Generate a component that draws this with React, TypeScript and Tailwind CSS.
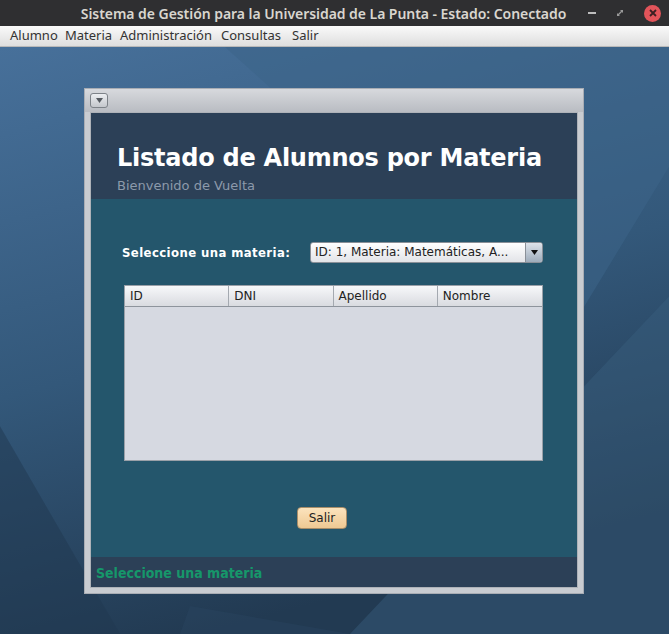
import React from 'react';

const dialog = { fontFamily: '"DejaVu Sans", "Liberation Sans", sans-serif' };
const condensed = { fontFamily: '"DejaVu Sans Condensed", "DejaVu Sans", sans-serif', fontStretch: 'condensed' as const };
const ubuntu = { fontFamily: '"Noto Sans", "Open Sans", sans-serif' };

const MENU = [
  { label: 'Alumno', cls: 'w-[55px]' },
  { label: 'Materia', cls: 'w-[55px]' },
  { label: 'Administración', cls: 'w-[101px]' },
  { label: 'Consultas', cls: 'w-[71px]' },
  { label: 'Salir', cls: 'w-[40px]' },
];
const COLUMNS = ['ID', 'DNI', 'Apellido', 'Nombre'];

function Wallpaper() {
  return (
    <svg className="absolute inset-0 w-full h-full" viewBox="0 0 669 588" preserveAspectRatio="none">
      <defs>
        <linearGradient id="wp" x1="0" y1="0" x2="0.3" y2="1">
          <stop offset="0" stopColor="#47709a" />
          <stop offset="0.55" stopColor="#33587a" />
          <stop offset="1" stopColor="#223a52" />
        </linearGradient>
      </defs>
      <rect width="669" height="588" fill="url(#wp)" />
      <polygon points="225,0 669,0 669,120 560,300" fill="#3d6489" opacity="0.55" />
      <polygon points="0,380 0,588 120,588" fill="#1f3750" opacity="0.5" />
      <polygon points="669,250 669,588 350,588" fill="#3a5f7f" opacity="0.45" />
      <polygon points="190,560 350,588 180,588" fill="#2a4561" opacity="0.4" />
    </svg>
  );
}

export default function App() {
  return (
    <div className="w-[669px] h-[634px] flex flex-col overflow-hidden bg-[#2f3136]">
      {/* Window title bar */}
      <div className="h-[26px] flex items-center relative bg-[#2f2f31]" style={ubuntu}>
        <div className="flex-1 text-center text-[14px] font-semibold text-[#d9d6cf] tracking-[-0.05px] pr-[22px]">
          Sistema de Gestión para la Universidad de La Punta - Estado: Conectado
        </div>
        <div className="absolute right-0 top-0 h-[26px] flex items-center gap-[19px] pr-[8px]">
          <div className="w-[8px] h-[2px] bg-[#bdbdbd]" />
          <svg width="10" height="10" viewBox="0 0 10 10">
            <path d="M2 8 L2 5 L5 8 Z M8 2 L8 5 L5 2 Z" fill="#9a9a9a" />
            <path d="M3 7 L7 3" stroke="#9a9a9a" strokeWidth="1.2" />
          </svg>
          <div className="w-[17px] h-[17px] rounded-full bg-[#e2545a] flex items-center justify-center">
            <svg width="8" height="8" viewBox="0 0 8 8">
              <path d="M1 1 L7 7 M7 1 L1 7" stroke="#3a1f22" strokeWidth="1.8" />
            </svg>
          </div>
        </div>
      </div>

      {/* Menu bar */}
      <div className="h-[21px] flex items-center pl-[10px] bg-gradient-to-b from-[#fafafa] to-[#dedede] border-b border-[#b9b9b9] text-[13px] text-[#333]" style={ubuntu}>
        {MENU.map(m => (
          <span key={m.label} className={m.cls}>{m.label}</span>
        ))}
      </div>

      {/* Desktop */}
      <div className="flex-1 relative pl-[84px] pt-[41px]">
        <Wallpaper />

        {/* Internal frame */}
        <div className="relative w-[500px] h-[506px] flex flex-col bg-[#c9ccd1] border border-[#a9adb4]" style={dialog}>
          <div className="h-[23px] flex items-center pl-[5px] bg-gradient-to-b from-[#d7d9dd] to-[#b9bcc2]">
            <div className="w-[18px] h-[15px] rounded-[3px] border border-[#7d8288] bg-gradient-to-b from-[#eceef1] to-[#c4c7cc] flex items-center justify-center">
              <svg width="7" height="5" viewBox="0 0 7 5">
                <path d="M0 0 L7 0 L3.5 5 Z" fill="#555a60" />
              </svg>
            </div>
          </div>

          <div className="flex-1 mx-[5px] mb-[5px] flex flex-col border border-[#aeb2b8]">
            {/* Header */}
            <div className="h-[86px] bg-[#2c4057] pl-[26px] pt-[31px]">
              <div className="text-[24px] leading-[28px] font-bold text-white tracking-[-0.25px]">Listado de Alumnos por Materia</div>
              <div className="mt-[6px] text-[13px] leading-[15px] text-[#8c9aab]">Bienvenido de Vuelta</div>
            </div>

            {/* Body */}
            <div className="flex-1 bg-[#24566c] flex flex-col pl-[31px] pt-[43px]">
              <div className="flex items-center h-[21px]">
                <span className="w-[188px] text-[13px] font-bold text-white tracking-[0.4px]" style={condensed}>Seleccione una materia:</span>
                <div className="w-[233px] h-[21px] flex rounded-[3px] border border-[#8a9098] bg-gradient-to-b from-white to-[#e2e4e8] overflow-hidden">
                  <div className="flex-1 pl-[4px] text-[12px] leading-[19px] text-[#222]">ID: 1, Materia: Matemáticas, A...</div>
                  <div className="w-[17px] border-l border-[#8a9098] bg-gradient-to-b from-[#dde3ea] to-[#9eacbb] flex items-center justify-center">
                    <svg width="7" height="5" viewBox="0 0 7 5">
                      <path d="M0 0 L7 0 L3.5 5 Z" fill="#111" />
                    </svg>
                  </div>
                </div>
              </div>

              <div className="mt-[22px] ml-[2px] w-[419px] h-[176px] flex flex-col border border-[#9aa0a8] bg-[#d6d9e1]">
                <div className="h-[21px] grid grid-cols-4 border-b border-[#8e949c] bg-gradient-to-b from-[#f7f8fa] to-[#d9dbe0]">
                  {COLUMNS.map((c, i) => (
                    <div key={c} className={`pl-[5px] text-[12px] leading-[20px] text-[#222] ${i < 3 ? 'border-r border-[#a4a9b0]' : ''}`}>
                      {c}
                    </div>
                  ))}
                </div>
              </div>

              <div className="mt-[44px] ml-[175px]">
                <button className="w-[50px] h-[22px] rounded-[4px] border border-[#a98e69] bg-gradient-to-b from-[#fbe3bd] to-[#efc993] text-[12px] text-[#222]">
                  Salir
                </button>
              </div>
            </div>

            {/* Status */}
            <div className="h-[30px] bg-[#2c4057] pl-[5px] pt-[2px] flex items-center">
              <span className="text-[14px] font-bold text-[#16976a]" style={condensed}>Seleccione una materia</span>
            </div>
          </div>
        </div>
      </div>
    </div>
  );
}
